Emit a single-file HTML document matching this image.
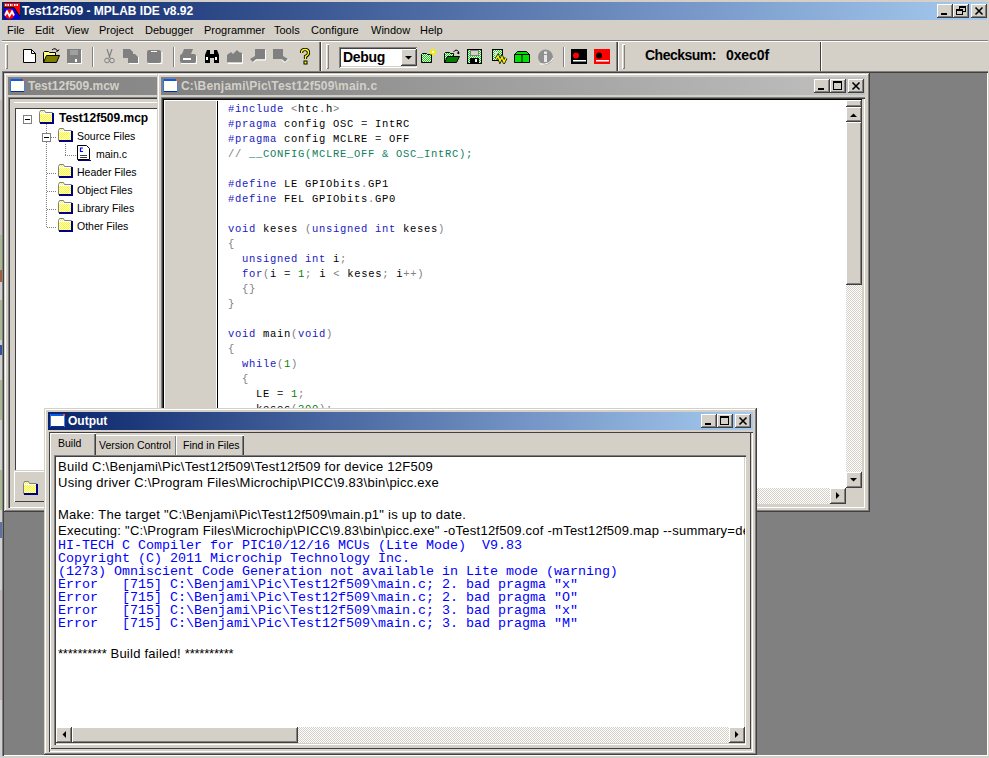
<!DOCTYPE html>
<html><head><meta charset="utf-8"><style>
*{margin:0;padding:0;box-sizing:border-box}
html,body{width:989px;height:758px;overflow:hidden;background:#d4d0c8;font-family:"Liberation Sans",sans-serif;font-size:11px;color:#000;position:relative}
.a{position:absolute}
.tx{position:absolute;white-space:pre;line-height:14px}
.mono{font-family:"Liberation Mono",monospace}
.kw{color:#2020c0}.op{color:#808080}.eq{color:#404040}.num{color:#008000}.cm{color:#108060}
</style></head><body>
<div class="a" style="left:0px;top:0px;width:2px;height:758px;background:#d0d0d0"></div>
<div class="a" style="left:0px;top:100px;width:2px;height:135px;background:#c4bcbc"></div>
<div class="a" style="left:0px;top:235px;width:2px;height:35px;background:#a8b890"></div>
<div class="a" style="left:0px;top:270px;width:2px;height:12px;background:#a06040"></div>
<div class="a" style="left:0px;top:300px;width:2px;height:40px;background:#a8b890"></div>
<div class="a" style="left:0px;top:345px;width:2px;height:10px;background:#3050a0"></div>
<div class="a" style="left:0px;top:380px;width:2px;height:40px;background:#a8b890"></div>
<div class="a" style="left:0px;top:470px;width:2px;height:40px;background:#a8b890"></div>
<div class="a" style="left:0px;top:522px;width:2px;height:16px;background:#6070a0"></div>
<div class="a" style="left:0px;top:590px;width:2px;height:110px;background:#c4b8b8"></div>
<div class="a" style="left:2px;top:2px;width:985px;height:18px;background:linear-gradient(to right,#0a246a,#a6caf0)"></div>
<svg class="a" style="left:4px;top:3px" width="16" height="16"><rect x="0" y="0" width="16" height="16" fill="#0000f0"/><path d="M0 0 H16 V13 L10 4 H0Z" fill="#ff0000"/><path d="M0 4.5 H10 L16 13.5" stroke="#000" fill="none" stroke-width="1"/><path d="M1 2 H5 M6 2 H9 M10 2 H14" stroke="#fff" stroke-width="2" stroke-dasharray="1 0.5"/><circle cx="5.5" cy="11" r="5" fill="#ff0000"/><path d="M1 12.5 L3 8.5 L5.5 13 L8 8.5 L10 12.5" stroke="#fff" stroke-width="1.8" fill="none"/></svg>
<div class="tx" style="left:22px;top:3px;color:#fff;font-weight:bold;font-size:12px;line-height:16px">Test12f509 - MPLAB IDE v8.92</div>
<div class="a" style="left:937px;top:4px;width:16px;height:14px;background:#d4d0c8;box-shadow:inset -1px -1px #404040,inset 1px 1px #fff,inset -2px -2px #808080,inset 2px 2px #d4d0c8;"></div>
<div class="a" style="left:941px;top:13px;width:6px;height:2px;background:#000"></div>
<div class="a" style="left:953px;top:4px;width:16px;height:14px;background:#d4d0c8;box-shadow:inset -1px -1px #404040,inset 1px 1px #fff,inset -2px -2px #808080,inset 2px 2px #d4d0c8;"></div>
<div class="a" style="left:959px;top:6px;width:7px;height:6px;border:1px solid #000;border-top-width:2px;background:#d4d0c8"></div>
<div class="a" style="left:956px;top:9px;width:7px;height:6px;border:1px solid #000;border-top-width:2px;background:#d4d0c8"></div>
<div class="a" style="left:971px;top:4px;width:16px;height:14px;background:#d4d0c8;box-shadow:inset -1px -1px #404040,inset 1px 1px #fff,inset -2px -2px #808080,inset 2px 2px #d4d0c8;"></div>
<svg class="a" style="left:971px;top:4px" width="16" height="14"><path d="M4.5 3.5 L11.5 10.5 M11.5 3.5 L4.5 10.5" stroke="#000" stroke-width="1.6"/></svg>
<div class="tx" style="left:7px;top:23px;font-size:11px">File</div>
<div class="tx" style="left:35px;top:23px;font-size:11px">Edit</div>
<div class="tx" style="left:65px;top:23px;font-size:11px">View</div>
<div class="tx" style="left:99px;top:23px;font-size:11px">Project</div>
<div class="tx" style="left:145px;top:23px;font-size:11px">Debugger</div>
<div class="tx" style="left:204px;top:23px;font-size:11px">Programmer</div>
<div class="tx" style="left:274px;top:23px;font-size:11px">Tools</div>
<div class="tx" style="left:311px;top:23px;font-size:11px">Configure</div>
<div class="tx" style="left:371px;top:23px;font-size:11px">Window</div>
<div class="tx" style="left:420px;top:23px;font-size:11px">Help</div>
<div class="a" style="left:2px;top:40px;width:986px;height:1px;background:#808080"></div>
<div class="a" style="left:2px;top:41px;width:986px;height:1px;background:#fff"></div>
<div class="a" style="left:5px;top:44px;width:3px;height:25px;box-shadow:inset 1px 1px #fff,inset -1px -1px #808080"></div>
<div class="a" style="left:92px;top:47px;width:2px;height:20px;box-shadow:inset 1px 0 #808080,inset -1px 0 #fff"></div>
<div class="a" style="left:173px;top:47px;width:2px;height:20px;box-shadow:inset 1px 0 #808080,inset -1px 0 #fff"></div>
<div class="a" style="left:563px;top:47px;width:2px;height:20px;box-shadow:inset 1px 0 #808080,inset -1px 0 #fff"></div>
<div class="a" style="left:319px;top:42px;width:3px;height:29px;box-shadow:inset 1px 0 #808080,inset -1px 0 #fff,inset -2px 0 #404040"></div>
<div class="a" style="left:326px;top:44px;width:3px;height:25px;box-shadow:inset 1px 1px #fff,inset -1px -1px #808080"></div>
<div class="a" style="left:616px;top:42px;width:3px;height:29px;box-shadow:inset 1px 0 #808080,inset -1px 0 #fff,inset -2px 0 #404040"></div>
<div class="a" style="left:622px;top:44px;width:3px;height:25px;box-shadow:inset 1px 1px #fff,inset -1px -1px #808080"></div>
<div class="a" style="left:820px;top:42px;width:2px;height:29px;box-shadow:inset 1px 0 #404040,inset -1px 0 #fff"></div>
<svg class="a" style="left:23px;top:49px" width="14" height="15"><path d="M0.5 0.5 H8.5 L12.5 4.5 V13.5 H0.5 Z" fill="#fff" stroke="#000"/><path d="M8.5 0.5 V4.5 H12.5" fill="none" stroke="#000"/></svg>
<svg class="a" style="left:43px;top:48px" width="18" height="16"><path d="M0.5 14.5 V4.5 L1.5 3.5 H5.5 L6.5 4.5 H12.5 V7.5" fill="#ffff80" stroke="#000"/><path d="M0.5 14.5 L3.5 7.5 H16.5 L13.5 14.5 Z" fill="#808000" stroke="#000"/><path d="M9 2 Q12 -1 15 3 L16 1.5 M15 3 L13 3.2" stroke="#000" fill="none"/></svg>
<svg class="a" style="left:67px;top:49px" width="15" height="15"><rect x="0" y="0" width="14" height="14" fill="#808080"/><rect x="3" y="1" width="8" height="5" fill="#a0a0a0"/><rect x="8" y="10" width="2" height="3" fill="#fff"/><path d="M1 14.5 H14.5 V1" stroke="#fff" fill="none"/></svg>
<svg class="a" style="left:104px;top:49px" width="11" height="15"><path d="M3 0 L6 9 M8 0 L5 9" stroke="#808080" fill="none" stroke-width="1.2"/><circle cx="3" cy="11.5" r="2.3" stroke="#808080" fill="none"/><circle cx="8" cy="11.5" r="2.3" stroke="#808080" fill="none"/></svg>
<svg class="a" style="left:123px;top:49px" width="17" height="15"><path d="M0 0 H7 L10 3 V9 H0Z" fill="#808080"/><path d="M5 5 H12 L15 8 V14 H5Z" fill="#808080"/><path d="M6 14.5 H15.5 V8" stroke="#fff" fill="none"/></svg>
<svg class="a" style="left:147px;top:49px" width="16" height="15"><rect x="0" y="1" width="14" height="13" rx="2" fill="#808080"/><rect x="4" y="2" width="6" height="1" fill="#fff"/><path d="M1 14.5 H15 V3" stroke="#fff" fill="none"/></svg>
<svg class="a" style="left:180px;top:49px" width="17" height="15"><path d="M4 0 H13 L11 5 H2Z" fill="#808080"/><rect x="0" y="5" width="16" height="9" rx="2" fill="#808080"/><rect x="3" y="9" width="8" height="2" fill="#fff"/><path d="M1 14.5 H16.5 V7" stroke="#fff" fill="none"/></svg>
<svg class="a" style="left:204px;top:49px" width="16" height="15"><path d="M1 14 V6 L3 1 H6 V14 Z M10 14 V1 H13 L15 6 V14 Z M6 5 H10 V9 H6Z" fill="#000"/><rect x="2" y="8" width="2" height="3" fill="#fff"/><rect x="11" y="8" width="2" height="3" fill="#fff"/></svg>
<svg class="a" style="left:227px;top:50px" width="16" height="14"><path d="M0 5 L4 2 L6 4 L10 0 L12 2 L15 3 V12 H0Z" fill="#808080"/><path d="M1 13.5 H15.5 V4" stroke="#fff" fill="none"/></svg>
<svg class="a" style="left:250px;top:49px" width="16" height="15"><path d="M5 0 H15 V10 H6 L3 13 L0 10 L5 7Z" fill="#808080"/><path d="M3 13.5 L6 11 H15.5 V1" stroke="#fff" fill="none"/></svg>
<svg class="a" style="left:273px;top:49px" width="16" height="15"><path d="M0 0 H10 V7 L15 10 L12 13 L9 10 H0Z" fill="#808080"/><path d="M9 11 L12 13.5 L15.5 10" stroke="#fff" fill="none"/></svg>
<svg class="a" style="left:299px;top:48px" width="12" height="17"><path d="M2.5 5 Q2.5 1.5 6 1.5 Q9.5 1.5 9.5 5 Q9.5 7 6.5 8.5 V11" stroke="#000" stroke-width="3.2" fill="none"/><path d="M2.5 5 Q2.5 1.5 6 1.5 Q9.5 1.5 9.5 5 Q9.5 7 6.5 8.5 V11" stroke="#ffff00" stroke-width="1.4" fill="none"/><rect x="4.5" y="12.5" width="4" height="4" fill="#000"/><rect x="5.5" y="13.5" width="2" height="2" fill="#ff0"/></svg>
<div class="a" style="left:339px;top:47px;width:78px;height:21px;background:#fff;box-shadow:inset 1px 1px #808080,inset -1px -1px #fff,inset 2px 2px #404040,inset -2px -2px #d4d0c8"></div>
<div class="a" style="left:401px;top:49px;width:16px;height:17px;background:#d4d0c8;box-shadow:inset -1px -1px #404040,inset 1px 1px #fff,inset -2px -2px #808080,inset 2px 2px #d4d0c8;"></div>
<svg class="a" style="left:401px;top:49px" width="16" height="17"><path d="M4 7 H11 L7.5 10.5Z" fill="#000"/></svg>
<div class="tx" style="left:343px;top:49px;font-weight:bold;font-size:14px;line-height:17px;letter-spacing:-0.3px">Debug</div>
<svg class="a" style="left:421px;top:48px" width="18" height="16"><defs><pattern id="dg" width="2" height="2" patternUnits="userSpaceOnUse"><rect width="2" height="2" fill="#fff"/><rect width="1" height="1" fill="#00e000"/><rect x="1" y="1" width="1" height="1" fill="#00e000"/></pattern></defs><path d="M0.5 14.5 V6.5 L1.5 5.5 H5.5 L6.5 6.5 H10.5 V14.5Z" fill="url(#dg)" stroke="#000"/><path d="M12 0.5 V8 M8.5 4 H15.5 M9.5 1.5 L14.5 6.5 M14.5 1.5 L9.5 6.5" stroke="#f0f000" stroke-width="1.3"/><rect x="11" y="3" width="2" height="2" fill="#fff"/></svg>
<svg class="a" style="left:444px;top:49px" width="17" height="15"><path d="M0.5 13.5 V4.5 L1.5 3.5 H5.5 L6.5 4.5 H9.5 V7" fill="url(#dg)" stroke="#000"/><path d="M0.5 13.5 L3.5 7.5 H15.5 L12.5 13.5 Z" fill="#008000" stroke="#000"/><path d="M9.5 3 Q12 -0.5 14.5 2.5 V5 M13 4 H15.5" stroke="#000" fill="none"/></svg>
<svg class="a" style="left:467px;top:49px" width="15" height="15"><rect x="0.5" y="0.5" width="14" height="14" fill="url(#dg)" stroke="#000"/><rect x="3.5" y="1.5" width="8" height="5" fill="#d4d0c8" stroke="#808080"/><rect x="3" y="9" width="9" height="5" fill="#000"/><rect x="8" y="10" width="2" height="3" fill="#fff"/></svg>
<svg class="a" style="left:492px;top:49px" width="16" height="15"><rect x="0.5" y="0.5" width="10" height="11" fill="url(#dg)" stroke="#000"/><rect x="3" y="3" width="4" height="6" fill="#e0e0e0"/><path d="M4 10 L6 7 L8 12 L10 8 L12 13 L14 9" stroke="#000" stroke-width="3" fill="none"/><path d="M4 10 L6 7 L8 12 L10 8 L12 13 L14 9" stroke="#f0f000" stroke-width="1.6" fill="none"/></svg>
<svg class="a" style="left:514px;top:51px" width="17" height="12"><path d="M0.5 3.5 L3.5 0.5 H12.5 L15.5 3.5 V11.5 H0.5Z" fill="#00e000" stroke="#000"/><path d="M0.5 3.5 H15.5 M8 3.5 V11.5" stroke="#000"/></svg>
<svg class="a" style="left:537px;top:49px" width="17" height="16"><circle cx="8.5" cy="8" r="7.5" fill="#909090"/><rect x="7" y="6" width="3" height="7" fill="#e8e8e8"/><rect x="7" y="2.5" width="3" height="2.5" fill="#e8e8e8"/><path d="M3 15 Q13 16 16 9" stroke="#fff" fill="none"/></svg>
<svg class="a" style="left:571px;top:49px" width="16" height="15"><rect x="0" y="0" width="16" height="15" fill="#000"/><circle cx="5" cy="6.5" r="3" fill="#ff0000"/><rect x="2" y="11" width="13" height="1.5" fill="#fff"/></svg>
<svg class="a" style="left:594px;top:49px" width="16" height="15"><rect x="0" y="0" width="16" height="15" fill="#ff0000"/><circle cx="5" cy="6.5" r="3" fill="#000"/><rect x="2" y="11" width="13" height="1.5" fill="#fff"/></svg>
<div class="tx" style="left:645px;top:47px;font-weight:bold;font-size:14px;letter-spacing:-0.5px;line-height:16px">Checksum:</div>
<div class="tx" style="left:726px;top:47px;font-weight:bold;font-size:14px;line-height:16px;letter-spacing:-0.1px">0xec0f</div>
<div class="a" style="left:2px;top:71px;width:986px;height:685px;background:#808080;box-shadow:inset 1px 1px #808080,inset 2px 2px #404040,inset -1px -1px #fff"></div>
<div class="a" style="left:4px;top:73px;width:160px;height:439px;background:#d4d0c8;box-shadow:inset -1px -1px #404040,inset 1px 1px #d4d0c8,inset -2px -2px #808080,inset 2px 2px #fff"></div>
<div class="a" style="left:8px;top:77px;width:150px;height:18px;background:linear-gradient(to right,#808080,#c0c0c0) 0 0/980px 18px no-repeat"></div>
<svg class="a" style="left:10px;top:79px" width="15" height="13"><rect x="0" y="0" width="15" height="13" fill="#fffff8"/><rect x="0" y="0" width="15" height="2" fill="#0a5ce8"/><rect x="0" y="12" width="15" height="1" fill="#0030a0"/><rect x="0" y="0" width="1" height="13" fill="#3070e0"/><rect x="14" y="0" width="1" height="13" fill="#5080e0"/><rect x="13" y="0" width="2" height="2" fill="#ff6020"/></svg>
<div class="tx" style="left:28px;top:78px;color:#d4d0c8;font-weight:bold;font-size:12px;line-height:16px">Test12f509.mcw</div>
<div class="a" style="left:8px;top:97px;width:150px;height:411px;box-shadow:inset 1px 1px #808080,inset 2px 2px #404040"></div>
<div class="a" style="left:14px;top:102px;width:143px;height:1px;background:#fff"></div>
<div class="a" style="left:15px;top:108px;width:142px;height:362px;background:#fff;box-shadow:inset 1px 1px #404040"></div>
<div class="a" style="left:14px;top:471px;width:143px;height:1px;background:#fff"></div>
<div class="a" style="left:14px;top:471px;width:31px;height:31px;box-shadow:inset 1px 0 #fff,inset -1px -1px #404040"></div>
<div class="a" style="left:10px;top:507px;width:147px;height:1px;background:#fff"></div>
<svg class="a" style="left:23px;top:481px" width="15" height="14"><defs><pattern id="dy" width="2" height="2" patternUnits="userSpaceOnUse"><rect width="2" height="2" fill="#fff"/><rect width="1" height="1" fill="#ff0"/><rect x="1" y="1" width="1" height="1" fill="#ff0"/></pattern></defs><path d="M0.5 12.5 V2.5 L1.5 0.5 H5.5 L6.5 2.5 H13.5 V12.5Z" fill="url(#dy)" stroke="#808080"/><rect x="1" y="12" width="14" height="2" fill="#000080"/><rect x="13" y="3" width="2" height="11" fill="#000080"/><rect x="1" y="3" width="12" height="1" fill="#fff"/></svg>
<div class="a" style="left:23px;top:115px;width:9px;height:9px;background:#fff;border:1px solid #808080"></div>
<div class="a" style="left:25px;top:119px;width:5px;height:1px;background:#000"></div>
<svg class="a" style="left:39px;top:110px" width="15" height="14"><defs><pattern id="dy" width="2" height="2" patternUnits="userSpaceOnUse"><rect width="2" height="2" fill="#fff"/><rect width="1" height="1" fill="#ff0"/><rect x="1" y="1" width="1" height="1" fill="#ff0"/></pattern></defs><path d="M0.5 12.5 V2.5 L1.5 0.5 H5.5 L6.5 2.5 H13.5 V12.5Z" fill="url(#dy)" stroke="#808080"/><rect x="1" y="12" width="14" height="2" fill="#000080"/><rect x="13" y="3" width="2" height="11" fill="#000080"/><rect x="1" y="3" width="12" height="1" fill="#fff"/></svg>
<div class="tx" style="left:59px;top:111px;font-weight:bold;font-size:12px">Test12f509.mcp</div>
<div class="a" style="left:46px;top:124px;width:1px;height:104px;background:repeating-linear-gradient(to bottom,#808080 0 1px,transparent 1px 2px)"></div>
<div class="a" style="left:42px;top:133px;width:9px;height:9px;background:#fff;border:1px solid #808080"></div>
<div class="a" style="left:44px;top:137px;width:5px;height:1px;background:#000"></div>
<div class="a" style="left:51px;top:137px;width:6px;height:1px;background:repeating-linear-gradient(to right,#808080 0 1px,transparent 1px 2px)"></div>
<svg class="a" style="left:58px;top:128px" width="15" height="14"><defs><pattern id="dy" width="2" height="2" patternUnits="userSpaceOnUse"><rect width="2" height="2" fill="#fff"/><rect width="1" height="1" fill="#ff0"/><rect x="1" y="1" width="1" height="1" fill="#ff0"/></pattern></defs><path d="M0.5 12.5 V2.5 L1.5 0.5 H5.5 L6.5 2.5 H13.5 V12.5Z" fill="url(#dy)" stroke="#808080"/><rect x="1" y="12" width="14" height="2" fill="#000080"/><rect x="13" y="3" width="2" height="11" fill="#000080"/><rect x="1" y="3" width="12" height="1" fill="#fff"/></svg>
<div class="tx" style="left:77px;top:129px;font-size:10.5px">Source Files</div>
<div class="a" style="left:65px;top:144px;width:1px;height:12px;background:repeating-linear-gradient(to bottom,#808080 0 1px,transparent 1px 2px)"></div>
<div class="a" style="left:65px;top:155px;width:12px;height:1px;background:repeating-linear-gradient(to right,#808080 0 1px,transparent 1px 2px)"></div>
<svg class="a" style="left:77px;top:145px" width="14" height="16"><path d="M0.5 0.5 H9.5 L12.5 3.5 V14.5 H0.5Z" fill="#fff" stroke="#000"/><rect x="1" y="15" width="13" height="1" fill="#000080"/><path d="M6 3 H3.5 V6.5 H6" stroke="#0000ff" fill="none" stroke-width="1.2"/><path d="M3 10.5 H10 M3 12.5 H10" stroke="#404040"/></svg>
<div class="tx" style="left:96px;top:147px;font-size:10.5px">main.c</div>
<div class="a" style="left:47px;top:173px;width:10px;height:1px;background:repeating-linear-gradient(to right,#808080 0 1px,transparent 1px 2px)"></div>
<svg class="a" style="left:58px;top:164px" width="15" height="14"><defs><pattern id="dy" width="2" height="2" patternUnits="userSpaceOnUse"><rect width="2" height="2" fill="#fff"/><rect width="1" height="1" fill="#ff0"/><rect x="1" y="1" width="1" height="1" fill="#ff0"/></pattern></defs><path d="M0.5 12.5 V2.5 L1.5 0.5 H5.5 L6.5 2.5 H13.5 V12.5Z" fill="url(#dy)" stroke="#808080"/><rect x="1" y="12" width="14" height="2" fill="#000080"/><rect x="13" y="3" width="2" height="11" fill="#000080"/><rect x="1" y="3" width="12" height="1" fill="#fff"/></svg>
<div class="tx" style="left:77px;top:165px;font-size:10.5px">Header Files</div>
<div class="a" style="left:47px;top:191px;width:10px;height:1px;background:repeating-linear-gradient(to right,#808080 0 1px,transparent 1px 2px)"></div>
<svg class="a" style="left:58px;top:182px" width="15" height="14"><defs><pattern id="dy" width="2" height="2" patternUnits="userSpaceOnUse"><rect width="2" height="2" fill="#fff"/><rect width="1" height="1" fill="#ff0"/><rect x="1" y="1" width="1" height="1" fill="#ff0"/></pattern></defs><path d="M0.5 12.5 V2.5 L1.5 0.5 H5.5 L6.5 2.5 H13.5 V12.5Z" fill="url(#dy)" stroke="#808080"/><rect x="1" y="12" width="14" height="2" fill="#000080"/><rect x="13" y="3" width="2" height="11" fill="#000080"/><rect x="1" y="3" width="12" height="1" fill="#fff"/></svg>
<div class="tx" style="left:77px;top:183px;font-size:10.5px">Object Files</div>
<div class="a" style="left:47px;top:209px;width:10px;height:1px;background:repeating-linear-gradient(to right,#808080 0 1px,transparent 1px 2px)"></div>
<svg class="a" style="left:58px;top:200px" width="15" height="14"><defs><pattern id="dy" width="2" height="2" patternUnits="userSpaceOnUse"><rect width="2" height="2" fill="#fff"/><rect width="1" height="1" fill="#ff0"/><rect x="1" y="1" width="1" height="1" fill="#ff0"/></pattern></defs><path d="M0.5 12.5 V2.5 L1.5 0.5 H5.5 L6.5 2.5 H13.5 V12.5Z" fill="url(#dy)" stroke="#808080"/><rect x="1" y="12" width="14" height="2" fill="#000080"/><rect x="13" y="3" width="2" height="11" fill="#000080"/><rect x="1" y="3" width="12" height="1" fill="#fff"/></svg>
<div class="tx" style="left:77px;top:201px;font-size:10.5px">Library Files</div>
<div class="a" style="left:47px;top:227px;width:10px;height:1px;background:repeating-linear-gradient(to right,#808080 0 1px,transparent 1px 2px)"></div>
<svg class="a" style="left:58px;top:218px" width="15" height="14"><defs><pattern id="dy" width="2" height="2" patternUnits="userSpaceOnUse"><rect width="2" height="2" fill="#fff"/><rect width="1" height="1" fill="#ff0"/><rect x="1" y="1" width="1" height="1" fill="#ff0"/></pattern></defs><path d="M0.5 12.5 V2.5 L1.5 0.5 H5.5 L6.5 2.5 H13.5 V12.5Z" fill="url(#dy)" stroke="#808080"/><rect x="1" y="12" width="14" height="2" fill="#000080"/><rect x="13" y="3" width="2" height="11" fill="#000080"/><rect x="1" y="3" width="12" height="1" fill="#fff"/></svg>
<div class="tx" style="left:77px;top:219px;font-size:10.5px">Other Files</div>
<div class="a" style="left:157px;top:73px;width:713px;height:439px;background:#d4d0c8;box-shadow:inset -1px -1px #404040,inset 1px 1px #d4d0c8,inset -2px -2px #808080,inset 2px 2px #fff"></div>
<div class="a" style="left:161px;top:77px;width:704px;height:18px;background:linear-gradient(to right,#808080,#c0c0c0)"></div>
<svg class="a" style="left:163px;top:79px" width="15" height="13"><rect x="0" y="0" width="15" height="13" fill="#fffff8"/><rect x="0" y="0" width="15" height="2" fill="#0a5ce8"/><rect x="0" y="12" width="15" height="1" fill="#0030a0"/><rect x="0" y="0" width="1" height="13" fill="#3070e0"/><rect x="14" y="0" width="1" height="13" fill="#5080e0"/><rect x="13" y="0" width="2" height="2" fill="#ff6020"/></svg>
<div class="tx" style="left:181px;top:78px;color:#d4d0c8;font-weight:bold;font-size:12px;line-height:16px;letter-spacing:0.2px">C:\Benjami\Pic\Test12f509\main.c</div>
<div class="a" style="left:814px;top:79px;width:16px;height:14px;background:#d4d0c8;box-shadow:inset -1px -1px #404040,inset 1px 1px #fff,inset -2px -2px #808080,inset 2px 2px #d4d0c8;"></div>
<div class="a" style="left:818px;top:88px;width:6px;height:2px;background:#000"></div>
<div class="a" style="left:830px;top:79px;width:16px;height:14px;background:#d4d0c8;box-shadow:inset -1px -1px #404040,inset 1px 1px #fff,inset -2px -2px #808080,inset 2px 2px #d4d0c8;"></div>
<div class="a" style="left:833px;top:81px;width:9px;height:9px;border:1px solid #000;border-top-width:2px"></div>
<div class="a" style="left:848px;top:79px;width:16px;height:14px;background:#d4d0c8;box-shadow:inset -1px -1px #404040,inset 1px 1px #fff,inset -2px -2px #808080,inset 2px 2px #d4d0c8;"></div>
<svg class="a" style="left:848px;top:79px" width="16" height="14"><path d="M4.5 3.5 L11.5 10.5 M11.5 3.5 L4.5 10.5" stroke="#000" stroke-width="1.6"/></svg>
<div class="a" style="left:161px;top:97px;width:704px;height:411px;box-shadow:inset 1px 1px #808080,inset 2px 2px #404040,inset -1px -1px #fff,inset -2px -2px #d4d0c8"></div>
<div class="a" style="left:163px;top:99px;width:55px;height:389px;background:#d4d0c8;box-shadow:inset 1px 1px #000,inset 2px 2px #fff,inset -1px 0 #000,inset -2px 0 #fff"></div>
<div class="a" style="left:218px;top:99px;width:628px;height:389px;background:#fff;box-shadow:inset 0 1px #000"></div>
<div class="a" style="left:846px;top:99px;width:16px;height:389px;background:repeating-conic-gradient(#d4d0c8 0 25%,#fff 0 50%) 0 0/2px 2px"></div>
<div class="a" style="left:846px;top:100px;width:16px;height:7px;background:#d4d0c8;box-shadow:inset -1px -1px #404040,inset 1px 1px #fff,inset -2px -2px #808080,inset 2px 2px #d4d0c8;"></div>
<div class="a" style="left:846px;top:107px;width:16px;height:15px;background:#d4d0c8;box-shadow:inset -1px -1px #404040,inset 1px 1px #fff,inset -2px -2px #808080,inset 2px 2px #d4d0c8;"></div>
<svg class="a" style="left:846px;top:107px" width="16" height="16"><path d="M4 10 H11 L7.5 6.5 Z" fill="#000"/></svg>
<div class="a" style="left:163px;top:99px;width:699px;height:1px;background:#000"></div>
<div class="a" style="left:846px;top:122px;width:16px;height:163px;background:#d4d0c8;box-shadow:inset -1px -1px #404040,inset 1px 1px #fff,inset -2px -2px #808080,inset 2px 2px #d4d0c8;"></div>
<div class="a" style="left:846px;top:472px;width:16px;height:16px;background:#d4d0c8;box-shadow:inset -1px -1px #404040,inset 1px 1px #fff,inset -2px -2px #808080,inset 2px 2px #d4d0c8;"></div>
<svg class="a" style="left:846px;top:472px" width="16" height="16"><path d="M4 6 H11 L7.5 9.5 Z" fill="#000"/></svg>
<div class="a" style="left:163px;top:488px;width:683px;height:16px;background:repeating-conic-gradient(#d4d0c8 0 25%,#fff 0 50%) 0 0/2px 2px"></div>
<div class="a" style="left:830px;top:488px;width:16px;height:16px;background:#d4d0c8;box-shadow:inset -1px -1px #404040,inset 1px 1px #fff,inset -2px -2px #808080,inset 2px 2px #d4d0c8;"></div>
<svg class="a" style="left:830px;top:488px" width="16" height="16"><path d="M6 4 V11 L9.5 7.5 Z" fill="#000"/></svg>
<div class="a" style="left:846px;top:488px;width:16px;height:16px;background:#d4d0c8"></div>
<div class="tx" style="left:228px;top:102px;font-family:Liberation Mono,monospace;font-size:10.5px;letter-spacing:0.7px;line-height:15px"><span class="kw">#include</span> <span class="op">&lt;</span>htc<span class="op">.</span>h<span class="op">&gt;</span></div>
<div class="tx" style="left:228px;top:117px;font-family:Liberation Mono,monospace;font-size:10.5px;letter-spacing:0.7px;line-height:15px"><span class="kw">#pragma</span> config OSC <span class="eq">=</span> IntRC</div>
<div class="tx" style="left:228px;top:132px;font-family:Liberation Mono,monospace;font-size:10.5px;letter-spacing:0.7px;line-height:15px"><span class="kw">#pragma</span> config MCLRE <span class="eq">=</span> OFF</div>
<div class="tx" style="left:228px;top:147px;font-family:Liberation Mono,monospace;font-size:10.5px;letter-spacing:0.7px;line-height:15px"><span class="cm"><span class="op">//</span> __CONFIG(MCLRE_OFF &amp; OSC_IntRC);</span></div>
<div class="tx" style="left:228px;top:177px;font-family:Liberation Mono,monospace;font-size:10.5px;letter-spacing:0.7px;line-height:15px"><span class="kw">#define</span> LE GPIObits<span class="op">.</span>GP1</div>
<div class="tx" style="left:228px;top:192px;font-family:Liberation Mono,monospace;font-size:10.5px;letter-spacing:0.7px;line-height:15px"><span class="kw">#define</span> FEL GPIObits<span class="op">.</span>GP0</div>
<div class="tx" style="left:228px;top:222px;font-family:Liberation Mono,monospace;font-size:10.5px;letter-spacing:0.7px;line-height:15px"><span class="kw">void</span> keses <span class="op">(</span><span class="kw">unsigned</span> <span class="kw">int</span> keses<span class="op">)</span></div>
<div class="tx" style="left:228px;top:237px;font-family:Liberation Mono,monospace;font-size:10.5px;letter-spacing:0.7px;line-height:15px"><span class="op">{</span></div>
<div class="tx" style="left:228px;top:252px;font-family:Liberation Mono,monospace;font-size:10.5px;letter-spacing:0.7px;line-height:15px">  <span class="kw">unsigned</span> <span class="kw">int</span> i<span class="op">;</span></div>
<div class="tx" style="left:228px;top:267px;font-family:Liberation Mono,monospace;font-size:10.5px;letter-spacing:0.7px;line-height:15px">  <span class="kw">for</span><span class="op">(</span>i <span class="eq">=</span> <span class="num">1</span><span class="op">;</span> i <span class="op">&lt;</span> keses<span class="op">;</span> i<span class="op">++)</span></div>
<div class="tx" style="left:228px;top:282px;font-family:Liberation Mono,monospace;font-size:10.5px;letter-spacing:0.7px;line-height:15px">  <span class="op">{}</span></div>
<div class="tx" style="left:228px;top:297px;font-family:Liberation Mono,monospace;font-size:10.5px;letter-spacing:0.7px;line-height:15px"><span class="op">}</span></div>
<div class="tx" style="left:228px;top:327px;font-family:Liberation Mono,monospace;font-size:10.5px;letter-spacing:0.7px;line-height:15px"><span class="kw">void</span> main<span class="op">(</span><span class="kw">void</span><span class="op">)</span></div>
<div class="tx" style="left:228px;top:342px;font-family:Liberation Mono,monospace;font-size:10.5px;letter-spacing:0.7px;line-height:15px"><span class="op">{</span></div>
<div class="tx" style="left:228px;top:357px;font-family:Liberation Mono,monospace;font-size:10.5px;letter-spacing:0.7px;line-height:15px">  <span class="kw">while</span><span class="op">(</span><span class="num">1</span><span class="op">)</span></div>
<div class="tx" style="left:228px;top:372px;font-family:Liberation Mono,monospace;font-size:10.5px;letter-spacing:0.7px;line-height:15px">  <span class="op">{</span></div>
<div class="tx" style="left:228px;top:387px;font-family:Liberation Mono,monospace;font-size:10.5px;letter-spacing:0.7px;line-height:15px">    LE <span class="eq">=</span> <span class="num">1</span><span class="op">;</span></div>
<div class="tx" style="left:228px;top:402px;font-family:Liberation Mono,monospace;font-size:10.5px;letter-spacing:0.7px;line-height:15px">    keses<span class="op">(</span><span class="num">300</span><span class="op">);</span></div>
<div class="a" style="left:44px;top:408px;width:713px;height:347px;background:#d4d0c8;box-shadow:inset -1px -1px #404040,inset 1px 1px #d4d0c8,inset -2px -2px #808080,inset 2px 2px #fff"></div>
<div class="a" style="left:48px;top:412px;width:705px;height:18px;background:linear-gradient(to right,#0a246a,#a6caf0)"></div>
<svg class="a" style="left:50px;top:414px" width="15" height="13"><rect x="0" y="0" width="15" height="13" fill="#fffff8"/><rect x="0" y="0" width="15" height="2" fill="#0a5ce8"/><rect x="0" y="12" width="15" height="1" fill="#0030a0"/><rect x="0" y="0" width="1" height="13" fill="#3070e0"/><rect x="14" y="0" width="1" height="13" fill="#5080e0"/><rect x="13" y="0" width="2" height="2" fill="#ff6020"/></svg>
<div class="tx" style="left:68px;top:413px;color:#fff;font-weight:bold;font-size:12px;line-height:16px">Output</div>
<div class="a" style="left:701px;top:414px;width:16px;height:14px;background:#d4d0c8;box-shadow:inset -1px -1px #404040,inset 1px 1px #fff,inset -2px -2px #808080,inset 2px 2px #d4d0c8;"></div>
<div class="a" style="left:705px;top:423px;width:6px;height:2px;background:#000"></div>
<div class="a" style="left:717px;top:414px;width:16px;height:14px;background:#d4d0c8;box-shadow:inset -1px -1px #404040,inset 1px 1px #fff,inset -2px -2px #808080,inset 2px 2px #d4d0c8;"></div>
<div class="a" style="left:720px;top:416px;width:9px;height:9px;border:1px solid #000;border-top-width:2px"></div>
<div class="a" style="left:735px;top:414px;width:16px;height:14px;background:#d4d0c8;box-shadow:inset -1px -1px #404040,inset 1px 1px #fff,inset -2px -2px #808080,inset 2px 2px #d4d0c8;"></div>
<svg class="a" style="left:735px;top:414px" width="16" height="14"><path d="M4.5 3.5 L11.5 10.5 M11.5 3.5 L4.5 10.5" stroke="#000" stroke-width="1.6"/></svg>
<div class="a" style="left:49px;top:432px;width:704px;height:320px;box-shadow:inset 1px 1px #404040,inset -1px -1px #fff"></div>
<div class="a" style="left:50px;top:433px;width:701px;height:316px;box-shadow:inset 1px 0 #fff,inset -1px -1px #404040"></div>
<div class="a" style="left:95px;top:435px;width:82px;height:21px;background:#d4d0c8;box-shadow:inset 1px 1px #fff,inset -1px 0 #404040,inset -2px 0 #808080"></div>
<div class="tx" style="left:99px;top:438px;font-size:10.5px">Version Control</div>
<div class="a" style="left:176px;top:435px;width:68px;height:21px;background:#d4d0c8;box-shadow:inset 1px 1px #fff,inset -1px 0 #404040,inset -2px 0 #808080"></div>
<div class="tx" style="left:183px;top:438px;font-size:10.5px">Find in Files</div>
<div class="a" style="left:50px;top:433px;width:46px;height:23px;background:#d4d0c8;box-shadow:inset 1px 1px #fff,inset -1px 0 #404040,inset -2px 0 #808080"></div>
<div class="tx" style="left:58px;top:436px;font-size:10.5px">Build</div>
<div class="a" style="left:54px;top:455px;width:692px;height:290px;background:#fff;box-shadow:inset 1px 1px #808080,inset 2px 2px #404040,inset -1px -1px #fff,inset -2px -2px #d4d0c8"></div>
<div class="a" style="left:56px;top:457px;width:689px;height:270px;overflow:hidden">
<div class="tx" style="left:2px;top:2px;font-size:13px;letter-spacing:0.25px;line-height:16px">Build C:\Benjami\Pic\Test12f509\Test12f509 for device 12F509</div>
<div class="tx" style="left:2px;top:18px;font-size:13px;letter-spacing:0.25px;line-height:16px">Using driver C:\Program Files\Microchip\PICC\9.83\bin\picc.exe</div>
<div class="tx" style="left:2px;top:50px;font-size:13px;letter-spacing:0.25px;line-height:16px">Make: The target &quot;C:\Benjami\Pic\Test12f509\main.p1&quot; is up to date.</div>
<div class="tx" style="left:2px;top:66px;font-size:13px;letter-spacing:0.25px;line-height:16px">Executing: &quot;C:\Program Files\Microchip\PICC\9.83\bin\picc.exe&quot; -oTest12f509.cof -mTest12f509.map --summary=default,-psect,-class,+mem,-hex,-file</div>
<div class="tx" style="left:2px;top:82px;font-family:Liberation Mono,monospace;font-size:13.33px;line-height:13px;color:#0000ff">HI-TECH C Compiler for PIC10/12/16 MCUs (Lite Mode)  V9.83</div>
<div class="tx" style="left:2px;top:95px;font-family:Liberation Mono,monospace;font-size:13.33px;line-height:13px;color:#0000ff">Copyright (C) 2011 Microchip Technology Inc.</div>
<div class="tx" style="left:2px;top:108px;font-family:Liberation Mono,monospace;font-size:13.33px;line-height:13px;color:#0000ff">(1273) Omniscient Code Generation not available in Lite mode (warning)</div>
<div class="tx" style="left:2px;top:121px;font-family:Liberation Mono,monospace;font-size:13.33px;line-height:13px;color:#0000ff">Error   [715] C:\Benjami\Pic\Test12f509\main.c; 2. bad pragma &quot;x&quot;</div>
<div class="tx" style="left:2px;top:134px;font-family:Liberation Mono,monospace;font-size:13.33px;line-height:13px;color:#0000ff">Error   [715] C:\Benjami\Pic\Test12f509\main.c; 2. bad pragma &quot;O&quot;</div>
<div class="tx" style="left:2px;top:147px;font-family:Liberation Mono,monospace;font-size:13.33px;line-height:13px;color:#0000ff">Error   [715] C:\Benjami\Pic\Test12f509\main.c; 3. bad pragma &quot;x&quot;</div>
<div class="tx" style="left:2px;top:160px;font-family:Liberation Mono,monospace;font-size:13.33px;line-height:13px;color:#0000ff">Error   [715] C:\Benjami\Pic\Test12f509\main.c; 3. bad pragma &quot;M&quot;</div>
<div class="tx" style="left:2px;top:189px;font-size:13px;letter-spacing:0.25px;line-height:16px"><span style="letter-spacing:-0.2px">**********</span> Build failed! <span style="letter-spacing:-0.2px">**********</span></div>
</div>
<div class="a" style="left:56px;top:727px;width:689px;height:16px;background:repeating-conic-gradient(#d4d0c8 0 25%,#fff 0 50%) 0 0/2px 2px"></div>
<div class="a" style="left:56px;top:727px;width:16px;height:16px;background:#d4d0c8;box-shadow:inset -1px -1px #404040,inset 1px 1px #fff,inset -2px -2px #808080,inset 2px 2px #d4d0c8;"></div>
<svg class="a" style="left:56px;top:727px" width="16" height="16"><path d="M10 4 V11 L6.5 7.5 Z" fill="#000"/></svg>
<div class="a" style="left:72px;top:727px;width:226px;height:16px;background:#d4d0c8;box-shadow:inset -1px -1px #404040,inset 1px 1px #fff,inset -2px -2px #808080,inset 2px 2px #d4d0c8;"></div>
<div class="a" style="left:729px;top:727px;width:16px;height:16px;background:#d4d0c8;box-shadow:inset -1px -1px #404040,inset 1px 1px #fff,inset -2px -2px #808080,inset 2px 2px #d4d0c8;"></div>
<svg class="a" style="left:729px;top:727px" width="16" height="16"><path d="M6 4 V11 L9.5 7.5 Z" fill="#000"/></svg>
</body></html>
